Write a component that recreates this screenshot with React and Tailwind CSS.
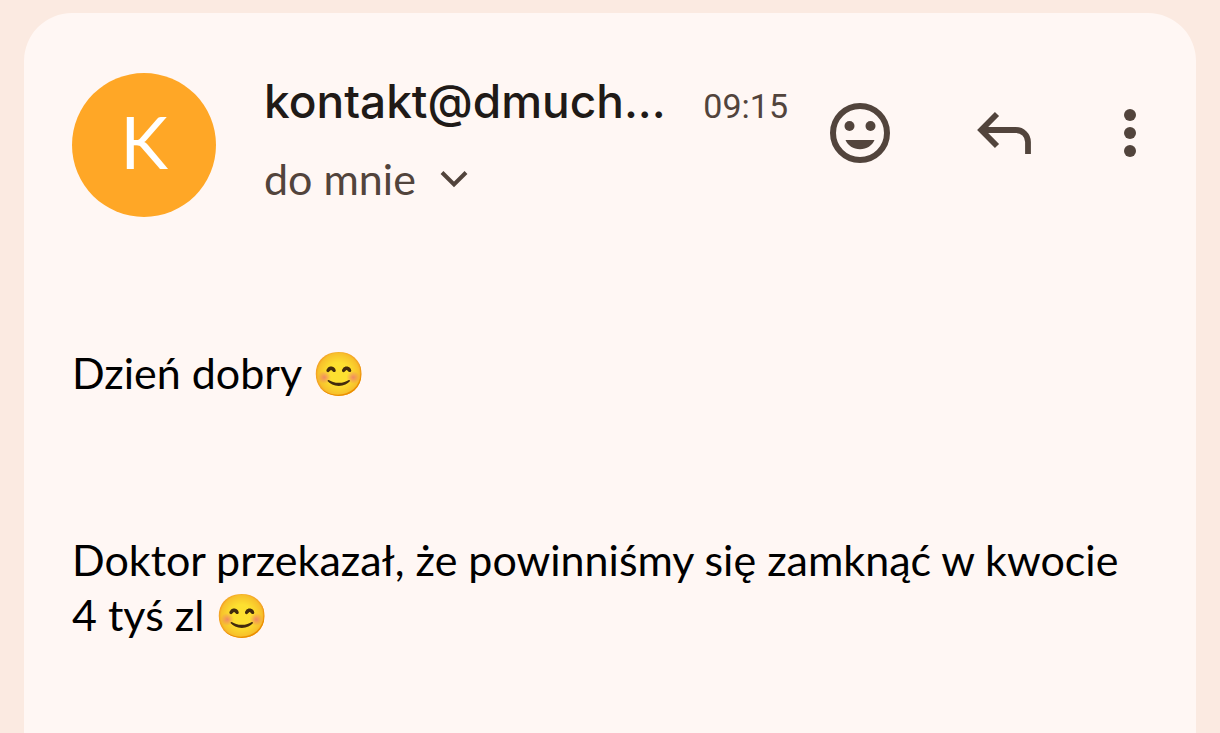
function SmileIcon() {
  return (
    <svg viewBox="0 0 72 72" className="size-[72px]" aria-hidden="true">
      <circle cx="36" cy="36" r="27" fill="none" stroke="currentColor" strokeWidth="6" />
      <circle cx="25.5" cy="29" r="5" fill="currentColor" />
      <circle cx="46.5" cy="29" r="5" fill="currentColor" />
      <path d="M21.5 43h29c-2.2 5.500-7.800 9.200-14.500 9.200S23.700 48.500 21.500 43z" fill="currentColor" />
    </svg>
  );
}

function ReplyIcon() {
  return (
    <svg viewBox="0 0 72 72" className="size-[72px]" aria-hidden="true">
      <path
        d="M29 17 13.200 33 29 49M14 33H48a12 12 0 0 1 12 12V57"
        fill="none"
        stroke="currentColor"
        strokeWidth="5.800"
      />
    </svg>
  );
}

function MoreIcon() {
  return (
    <svg viewBox="0 0 36 72" className="h-[72px] w-9" aria-hidden="true" fill="currentColor">
      <circle cx="18" cy="18" r="6" />
      <circle cx="18" cy="36" r="6" />
      <circle cx="18" cy="54" r="6" />
    </svg>
  );
}

function ChevronIcon() {
  return (
    <svg viewBox="0 0 28 18" className="h-[18px] w-7" aria-hidden="true">
      <path d="M2 2.500 14 14.500 26 2.500" fill="none" stroke="currentColor" strokeWidth="4" />
    </svg>
  );
}

export default function App() {
  return (
    <main className="flex min-h-screen flex-col bg-[#fbeae1] px-6 pt-[13px] font-['Lato',sans-serif]">
      <article className="flex-1 rounded-t-[48px] bg-[#fff7f4] px-12 pt-[60px] text-black">
        <header className="flex items-start text-[#52443c]">
          <div className="flex size-36 shrink-0 items-center justify-center rounded-full bg-[#ffa726] pb-2 text-[72px] leading-none text-white">
            K
          </div>
          <div className="ml-12 min-w-0 flex-1">
            <div className="flex items-baseline justify-between">
              <h1 className="truncate font-['Inter',sans-serif] text-[46px] leading-[56px] font-medium text-[#201a17]">
                kontakt@dmuch...
              </h1>
              <time className="shrink-0 font-['Roboto',sans-serif] text-[34px] leading-[56px]">09:15</time>
            </div>
            <button type="button" className="mt-[17px] flex items-center gap-6 text-[43px] leading-[55px]">
              do mnie
              <ChevronIcon />
            </button>
          </div>
          <div className="mt-6 ml-9 flex shrink-0 gap-[72px]">
            <button type="button" aria-label="Dodaj reakcję">
              <SmileIcon />
            </button>
            <button type="button" aria-label="Odpowiedz">
              <ReplyIcon />
            </button>
            <button type="button" aria-label="Więcej opcji">
              <MoreIcon />
            </button>
          </div>
        </header>
        <div className="mt-32 flex flex-col gap-[132px] text-[43px] leading-[55px]">
          <p>Dzień dobry 😊</p>
          <p>Doktor przekazał, że powinniśmy się zamknąć w kwocie 4 tyś zl 😊</p>
        </div>
      </article>
    </main>
  );
}
